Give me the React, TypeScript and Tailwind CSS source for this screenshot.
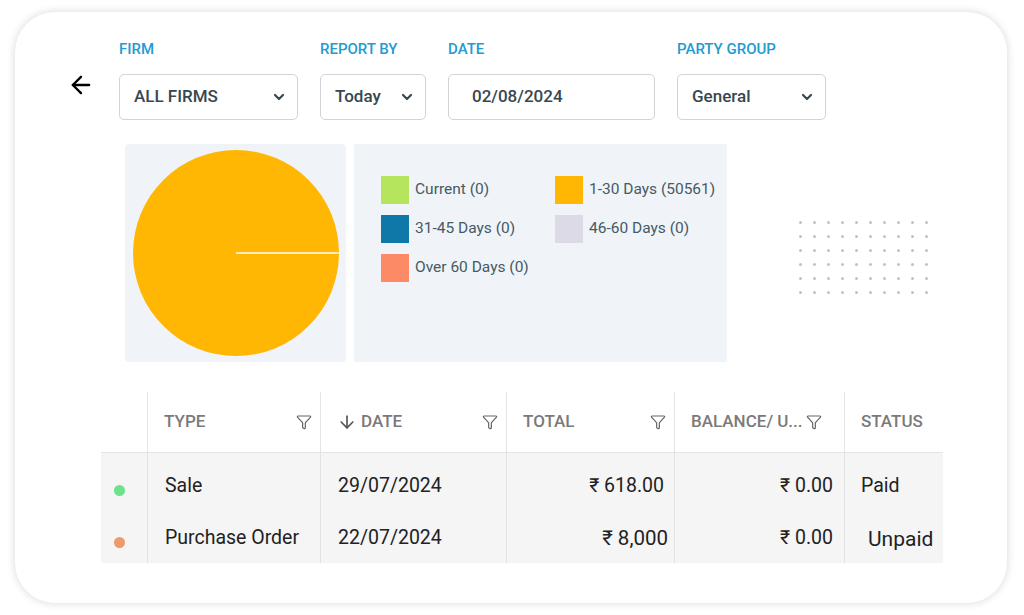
import { ArrowLeft, ArrowDown, ChevronDown, Filter } from 'lucide-react';

const font = { fontFamily: 'Roboto, "Noto Sans", sans-serif' };

function SelectBox({ label, value, width, chevron = true, textPad = 'pl-[14px]' }: { label: string; value: string; width: string; chevron?: boolean; textPad?: string }) {
    return (
        <div className="flex flex-col">
            <div className="h-[20px] leading-[20px] text-[15px] font-medium text-[#229bd2] uppercase">{label}</div>
            <div className={`${width} mt-[15px] h-[46px] border border-[#cfd4d8] rounded-[5px] flex items-center justify-between ${textPad} pr-[10px] bg-white`}>
                <span className="text-[17px] font-medium text-[#37474f]">{value}</span>
                {chevron && <ChevronDown size={16} strokeWidth={3.2} className="text-[#37474f]" />}
            </div>
        </div>
    );
}

const legend = [
    { color: 'bg-[#b4e55c]', text: 'Current (0)' },
    { color: 'bg-[#ffb703]', text: '1-30 Days (50561)' },
    { color: 'bg-[#0f78a8]', text: '31-45 Days (0)' },
    { color: 'bg-[#dcdae6]', text: '46-60 Days (0)' },
    { color: 'bg-[#fd8a66]', text: 'Over 60 Days (0)' },
];

function HeaderCell({ children, width, filter = true, last = false, pr = 'pr-[8px]' }: { children: React.ReactNode; width: string; filter?: boolean; last?: boolean; pr?: string }) {
    return (
        <div className={`${width} h-full flex items-center justify-between pl-[16px] ${pr} ${last ? '' : 'border-r border-[#e3e3e3]'}`}>
            <div className="flex items-center text-[17px] font-medium text-[#7a7a7a] whitespace-nowrap">{children}</div>
            {filter && <Filter size={16} strokeWidth={1.8} className="text-[#666] shrink-0" />}
        </div>
    );
}

function Row({ dot, type, date, total, balance, status, h, pt, big }: { dot: string; type: string; date: string; total: string; balance: string; status: string; h: string; pt: string; big?: boolean }) {
    return (
        <div className={`flex ${h} text-[19.5px] text-[#222]`}>
            <div className={`w-[47px] border-r border-[#e3e3e3] flex items-center ${pt}`}>
                <span className={`ml-[13px] mt-[8px] w-[11px] h-[11px] rounded-full ${dot}`} />
            </div>
            <div className={`w-[173px] border-r border-[#e3e3e3] flex items-center pl-[17px] ${pt}`}>{type}</div>
            <div className={`w-[186px] border-r border-[#e3e3e3] flex items-center pl-[17px] ${pt}`}>{date}</div>
            <div className={`w-[168px] border-r border-[#e3e3e3] flex items-center justify-end ${big ? 'pr-[6px] text-[20.5px]' : 'pr-[10px]'} ${pt}`}>{total}</div>
            <div className={`w-[170px] border-r border-[#e3e3e3] flex items-center justify-end pr-[11px] ${pt}`}>{balance}</div>
            <div className={`w-[98px] flex items-center ${big ? 'pl-[23px] text-[21px] mt-[3px]' : 'pl-[16px]'} ${pt}`}>{status}</div>
        </div>
    );
}

export default function App() {
    return (
        <div className="w-[1024px] h-[615px] bg-white pt-[12px] pl-[15px]" style={font}>
            <div className="w-[992px] h-[591px] bg-white rounded-[40px] shadow-[0_0_9px_rgba(0,0,0,0.16)] pt-[27px]">
                {/* filters */}
                <div className="flex items-end ml-[52px]">
                    <ArrowLeft size={28} strokeWidth={2} className="text-black mb-[21px] mr-[24px]" />
                    <div className="flex gap-[22px]">
                        <SelectBox label="Firm" value="ALL FIRMS" width="w-[179px]" />
                        <SelectBox label="Report By" value="Today" width="w-[106px]" />
                        <SelectBox label="Date" value="02/08/2024" width="w-[207px]" chevron={false} textPad="pl-[23px]" />
                        <SelectBox label="Party Group" value="General" width="w-[149px]" />
                    </div>
                </div>

                {/* chart */}
                <div className="flex items-center ml-[110px] mt-[24px]">
                    <div className="w-[221px] h-[218px] bg-[#f0f4f8] rounded-[4px] flex items-center justify-center">
                        <svg width="210" height="210" viewBox="0 0 210 210">
                            <circle cx="105" cy="105" r="103" fill="#ffb703" />
                            <line x1="105" y1="105" x2="209" y2="105" stroke="#fff" strokeWidth="1.5" />
                        </svg>
                    </div>
                    <div className="w-[373px] h-[218px] bg-[#f0f4f8] ml-[8px] pl-[27px] pt-[32px]">
                        <div className="grid grid-cols-[174px_auto] gap-y-[11px]">
                            {legend.map((l) => (
                                <div key={l.text} className="flex items-center h-[28px]">
                                    <span className={`w-[28px] h-[28px] ${l.color}`} />
                                    <span className="ml-[6px] text-[15.5px] text-[#455a64]">{l.text}</span>
                                </div>
                            ))}
                        </div>
                    </div>
                    <div className="ml-[66px] mt-[8px] grid grid-cols-10">
                        {Array.from({ length: 60 }).map((_, i) => (
                            <div key={i} className="w-[14px] h-[14px] flex items-center justify-center">
                                <span className="w-[3px] h-[3px] rounded-full bg-[#c2c2c2]" />
                            </div>
                        ))}
                    </div>
                </div>

                {/* table */}
                <div className="ml-[86px] mt-[30px] w-[842px]">
                    <div className="flex h-[61px] border-b border-[#e3e3e3]">
                        <div className="w-[47px] h-full border-r border-[#e3e3e3]" />
                        <HeaderCell width="w-[173px]">TYPE</HeaderCell>
                        <HeaderCell width="w-[186px]">
                            <ArrowDown size={20} strokeWidth={2} className="text-[#555] mr-[4px]" />
                            DATE
                        </HeaderCell>
                        <HeaderCell width="w-[168px]">TOTAL</HeaderCell>
                        <HeaderCell width="w-[170px]" pr="pr-[22px]">BALANCE/ U...</HeaderCell>
                        <HeaderCell width="w-[98px]" filter={false} last>STATUS</HeaderCell>
                    </div>
                    <div className="bg-[#f5f5f5]">
                        <Row dot="bg-[#6fe08b]" type="Sale" date="29/07/2024" total="₹ 618.00" balance="₹ 0.00" status="Paid" h="h-[60px]" pt="pt-[6px]" />
                        <Row dot="bg-[#eb9a6d]" type="Purchase Order" date="22/07/2024" total="₹ 8,000" balance="₹ 0.00" status="Unpaid" h="h-[50px]" pt="" big />
                    </div>
                </div>
            </div>
        </div>
    );
}
